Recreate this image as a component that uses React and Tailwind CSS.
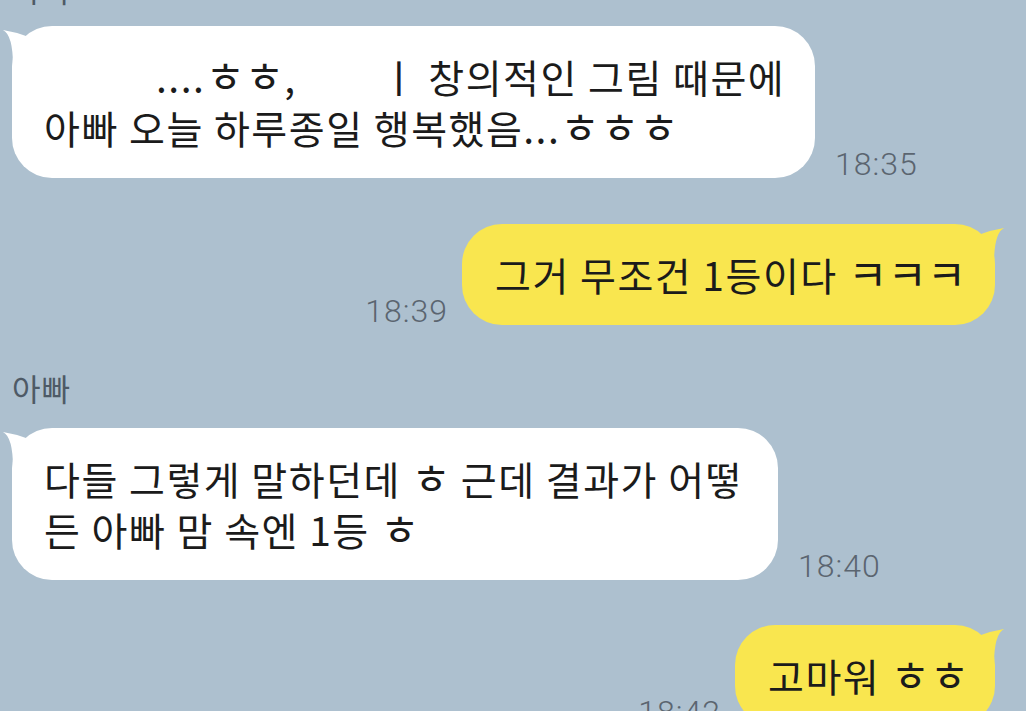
import React from 'react';

// wrap standalone jamo (ㅎ, ㅋ) so they render at the size the chat font uses
function J({ text }) {
  return text.split(/([ㅋㅎ])/).map((p, i) =>
    p === 'ㅋ' || p === 'ㅎ' ? (
      <span key={i} className="text-[1.1em] leading-none tracking-[0px]">{p}</span>
    ) : (
      <React.Fragment key={i}>{p}</React.Fragment>
    )
  );
}

const messages = [
  { type: 'name', text: '아빠', cls: '-mt-[31px] mb-[17px]' },
  {
    type: 'in',
    time: '18:35',
    width: 'w-[803px]',
    lines: [
      <>
        <span className="inline-block w-[112px]" />....<J text="ㅎㅎ" />,<span className="inline-block w-[84px]" />ㅣ 창의적인 그림 때문에
      </>,
      <J text="아빠 오늘 하루종일 행복했음...ㅎㅎㅎ" />,
    ],
  },
  { type: 'out', time: '18:39', width: 'w-[533px]', cls: 'mt-[46px]', lines: [<J text="그거 무조건 1등이다 ㅋㅋㅋ" />] },
  { type: 'name', text: '아빠', cls: 'mt-[43px] mb-[20px]' },
  {
    type: 'in',
    time: '18:40',
    width: 'w-[766px]',
    lines: [<J text="다들 그렇게 말하던데 ㅎ 근데 결과가 어떻" />, <J text="든 아빠 맘 속엔 1등 ㅎ" />],
  },
  { type: 'out', time: '18:42', width: 'w-[260px]', cls: 'mt-[45px]', lines: [<J text="고마워 ㅎㅎ" />] },
];

// little pointed tail on the top corner, with the notch where it meets the rounded corner
function Tail({ side, color }) {
  const pos = side === 'left' ? 'left-[-12px]' : 'right-[-12px] -scale-x-100';
  return (
    <svg className={`absolute top-0 ${pos}`} width="44" height="44" viewBox="-12 0 44 44">
      <path d="M-9 4 Q3 6 14 10 L14 40 L1 40 Q1 9 -9 4 Z" fill={color} />
    </svg>
  );
}

function Time({ children }) {
  return (
    <span className="mb-[-2px] font-['Roboto',sans-serif] text-[32px] leading-[32px] font-light tracking-[1px] text-[#5b6570] whitespace-nowrap">
      {children}
    </span>
  );
}

function Bubble({ side, width, lines }) {
  const color = side === 'left' ? '#ffffff' : '#f9e64f';
  return (
    <div
      className={`relative ${width} rounded-[40px] ${side === 'left' ? 'bg-white pl-[32px]' : 'bg-[#f9e64f] pl-[33px]'} py-[25px] text-[39px] leading-[51px] tracking-[1.5px] text-[#1b1b1b] whitespace-nowrap`}
    >
      <Tail side={side} color={color} />
      {lines.map((l, i) => (
        <div key={i} className="relative">{l}</div>
      ))}
    </div>
  );
}

export default function App() {
  return (
    <div className="w-[1026px] h-[711px] overflow-hidden bg-[#adc0cf] font-['Noto_Sans_CJK_KR','Noto_Sans',sans-serif]">
      <div className="flex flex-col pl-[12px] pr-[31px]">
        {messages.map((m, i) => {
          if (m.type === 'name') {
            return (
              <div key={i} className={`${m.cls} h-[40px] text-[31px] leading-[40px] tracking-[1px] text-[#4e5a66]`}>
                {m.text}
              </div>
            );
          }
          if (m.type === 'in') {
            return (
              <div key={i} className={`flex items-end gap-[20px] ${m.cls || ''}`}>
                <Bubble side="left" width={m.width} lines={m.lines} />
                <Time>{m.time}</Time>
              </div>
            );
          }
          return (
            <div key={i} className={`flex items-end justify-end gap-[14px] ${m.cls || ''}`}>
              <Time>{m.time}</Time>
              <Bubble side="right" width={m.width} lines={m.lines} />
            </div>
          );
        })}
      </div>
    </div>
  );
}
